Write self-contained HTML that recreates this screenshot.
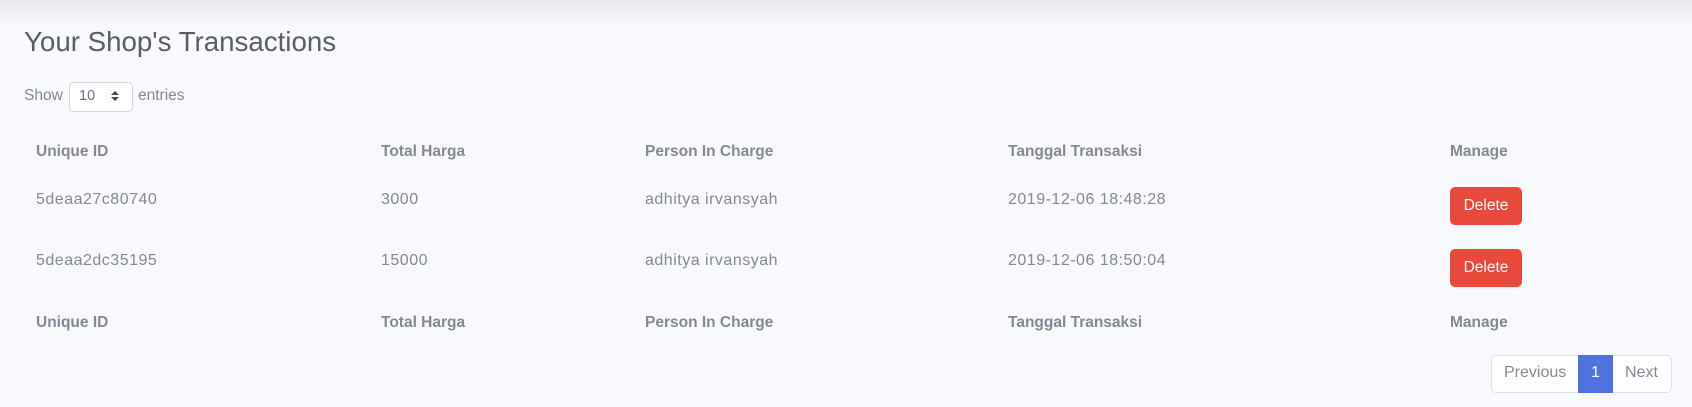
<!DOCTYPE html>
<html><head><style>
body{margin:0;width:1692px;height:407px;background:#f8f9fc;font-family:"Liberation Sans",sans-serif;color:#858796;position:relative;overflow:hidden}
.sh{position:absolute;left:0;top:0;width:1692px;height:28px;background:linear-gradient(#e6e7ea,#f8f9fc)}
.a{position:absolute;white-space:nowrap}
.h{font-weight:bold;font-size:15.5px}
.d{font-size:16px;letter-spacing:0.5px}
.btn{position:absolute;left:1450px;width:72px;height:38px;background:#e74a3b;border-radius:5px;color:#fff;font-size:15.5px;text-align:center;line-height:38px}
</style></head><body>
<div class="sh"></div>
<div class="a" style="left:24px;top:26px;font-size:27.7px;color:#5a5c69">Your Shop's Transactions</div>
<div class="a" style="left:24px;top:87px;font-size:15.5px">Show</div>
<div class="a" style="left:69px;top:82px;width:62px;height:28px;border:1px solid #d1d3e2;border-radius:5px;background:#fff"></div>
<div class="a" style="left:79px;top:88px;font-size:14.5px;color:#6e707e">10</div>
<svg class="a" style="left:111px;top:90px" width="8" height="12" viewBox="0 0 8 12"><path d="M0 5L4 1L8 5Z M0 7L4 11L8 7Z" fill="#444"/></svg>
<div class="a" style="left:138px;top:87px;font-size:15.5px">entries</div>

<div class="a h" style="left:36px;top:143px">Unique ID</div>
<div class="a h" style="left:381px;top:143px">Total Harga</div>
<div class="a h" style="left:645px;top:143px">Person In Charge</div>
<div class="a h" style="left:1008px;top:143px">Tanggal Transaksi</div>
<div class="a h" style="left:1450px;top:143px">Manage</div>

<div class="a d" style="left:36px;top:191px">5deaa27c80740</div>
<div class="a d" style="left:381px;top:191px">3000</div>
<div class="a d" style="left:645px;top:191px">adhitya irvansyah</div>
<div class="a d" style="left:1008px;top:191px">2019-12-06 18:48:28</div>
<div class="btn" style="top:187px">Delete</div>

<div class="a d" style="left:36px;top:252px">5deaa2dc35195</div>
<div class="a d" style="left:381px;top:252px">15000</div>
<div class="a d" style="left:645px;top:252px">adhitya irvansyah</div>
<div class="a d" style="left:1008px;top:252px">2019-12-06 18:50:04</div>
<div class="btn" style="top:249px">Delete</div>

<div class="a h" style="left:36px;top:314px">Unique ID</div>
<div class="a h" style="left:381px;top:314px">Total Harga</div>
<div class="a h" style="left:645px;top:314px">Person In Charge</div>
<div class="a h" style="left:1008px;top:314px">Tanggal Transaksi</div>
<div class="a h" style="left:1450px;top:314px">Manage</div>

<div class="a" style="left:1491px;top:355px;width:179px;height:36px;border:1px solid #dddfeb;border-radius:5px;background:#fff"></div>
<div class="a" style="left:1578px;top:355px;width:35px;height:38px;background:#4e73df"></div>
<div class="a d" style="left:1504px;top:364px;letter-spacing:0">Previous</div>
<div class="a d" style="left:1591px;top:364px;color:#fff">1</div>
<div class="a d" style="left:1625px;top:364px;letter-spacing:0">Next</div>
</body></html>
